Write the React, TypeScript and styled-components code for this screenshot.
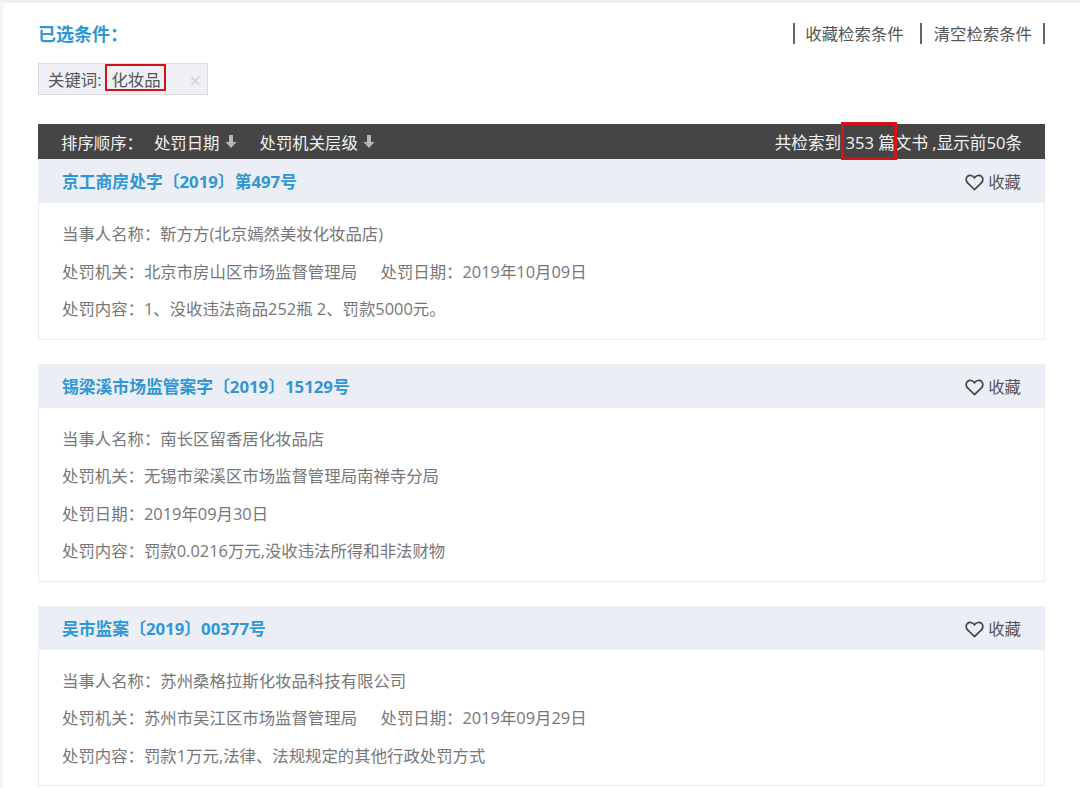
import React from 'react';
import styled, { createGlobalStyle } from 'styled-components';

const GlobalStyle = createGlobalStyle`
  html, body {
    margin: 0;
    padding: 0;
    background: #fff;
    overflow: hidden;
  }
  body {
    font-family: "Open Sans", "Noto Sans CJK SC", sans-serif;
  }
`;

const Page = styled.div`
  box-sizing: border-box;
  width: 1080px;
  height: 788px;
  overflow: hidden;
  padding: 0 35px 0 35px;
  border-top: 3px solid #f0f0f0;
  border-left: 3px solid #f5f5f5;
`;

const TopRow = styled.div`
  display: flex;
  justify-content: space-between;
  align-items: flex-start;
  height: 60px;
`;

const Title = styled.h2`
  margin: 19px 0 0;
  font-size: 18px;
  line-height: 24px;
  font-weight: 700;
  color: #2f97d3;
`;

const Actions = styled.div`
  display: flex;
  margin-top: 20px;
  border-right: 2px solid #666;
  height: 21px;
`;

const ActionLink = styled.a`
  display: block;
  padding: 0 16px 0 10px;
  border-left: 2px solid #666;
  font-size: 16.4px;
  line-height: 21px;
  color: #555;
  white-space: nowrap;
  &:last-child {
    padding: 0 11px 0 12px;
  }
`;

const Tag = styled.div`
  position: relative;
  box-sizing: border-box;
  display: flex;
  align-items: center;
  width: 170px;
  height: 32px;
  padding-left: 9px;
  background: #eef0f6;
  border: 1px solid #dcdcdc;
  font-size: 16.4px;
  color: #555;
`;

const TagClose = styled.span`
  position: absolute;
  right: 6px;
  top: 8px;
  font-size: 20px;
  line-height: 17px;
  color: #cfcfcf;
`;

const Mark = styled.span<{ $inset: string; $width: number }>`
  position: relative;
  display: inline-block;
  &::after {
    content: '';
    position: absolute;
    inset: ${(p) => p.$inset};
    border: ${(p) => p.$width}px solid #d4121a;
    pointer-events: none;
  }
`;

const TagValue = styled(Mark)`
  margin-left: 10px;
`;

const SortBar = styled.div`
  display: flex;
  justify-content: space-between;
  align-items: center;
  height: 35px;
  margin-top: 29px;
  padding: 0 23px 0 23px;
  background: #454545;
  font-size: 16.4px;
  color: #f2f2f2;
  white-space: nowrap;
`;

const SortGroup = styled.div`
  display: flex;
  align-items: center;
`;

const SortLabel = styled.span`
  margin-right: 11px;
`;

const SortItem = styled.span`
  display: flex;
  align-items: center;
  gap: 5px;
  margin-right: 23px;
`;

const ResultCount = styled.span`
  font-size: 16.6px;
`;

const Card = styled.section`
  margin-bottom: 24px;
  border: 1px solid #ececec;
  border-top: none;
`;

const CardHead = styled.header`
  display: flex;
  justify-content: space-between;
  align-items: center;
  height: 44px;
  margin: 0 -1px;
  padding: 0 24px 0 24px;
  background: #eceef6;
`;

const CardTitle = styled.a`
  font-size: 16.8px;
  font-weight: 700;
  color: #2f97d3;
`;

const Favorite = styled.span`
  display: flex;
  align-items: center;
  gap: 4px;
  font-size: 16.4px;
  color: #555;
`;

const Heart = styled.svg`
  margin-top: 3px;
`;

const CardBody = styled.div`
  padding: 12px 23px 11px;
`;

const Line = styled.p`
  margin: 0;
  height: 37.5px;
  font-size: 16.4px;
  line-height: 37.5px;
  color: #777;
  white-space: nowrap;
`;

const Gap = styled.span`
  display: inline-block;
  width: 23.5px;
`;

type CardData = {
  title: string;
  lines: React.ReactNode[];
};

const cards: CardData[] = [
  {
    title: '京工商房处字〔2019〕第497号',
    lines: [
      '当事人名称：靳方方(北京嫣然美妆化妆品店)',
      <>处罚机关：北京市房山区市场监督管理局<Gap />处罚日期：2019年10月09日</>,
      '处罚内容：1、没收违法商品252瓶 2、罚款5000元。',
    ],
  },
  {
    title: '锡梁溪市场监管案字〔2019〕15129号',
    lines: [
      '当事人名称：南长区留香居化妆品店',
      '处罚机关：无锡市梁溪区市场监督管理局南禅寺分局',
      '处罚日期：2019年09月30日',
      '处罚内容：罚款0.0216万元,没收违法所得和非法财物',
    ],
  },
  {
    title: '吴市监案〔2019〕00377号',
    lines: [
      '当事人名称：苏州桑格拉斯化妆品科技有限公司',
      <>处罚机关：苏州市吴江区市场监督管理局<Gap />处罚日期：2019年09月29日</>,
      '处罚内容：罚款1万元,法律、法规规定的其他行政处罚方式',
    ],
  },
];

const DownArrow = () => (
  <svg width="12" height="15" viewBox="0 0 12 15" fill="#b5b5b5">
    <path d="M4 1h4v7h3.5L6 14 .5 8H4z" />
  </svg>
);

const HeartIcon = () => (
  <Heart width="19" height="17" viewBox="0 0 19 17" fill="none" stroke="#444" strokeWidth="1.7">
    <path d="M9.5 15.5 2.6 8.8C.6 6.8.8 4 2.4 2.5 4.2.9 7.4 1 9.5 3.8 11.6 1 14.8.9 16.6 2.5c1.6 1.5 1.8 4.3-.2 6.3z" />
  </Heart>
);

const App: React.FC = () => {
  return (
    <Page>
      <GlobalStyle />
      <TopRow>
        <Title>已选条件：</Title>
        <Actions>
          <ActionLink>收藏检索条件</ActionLink>
          <ActionLink>清空检索条件</ActionLink>
        </Actions>
      </TopRow>
      <Tag>
        关键词:
        <TagValue $inset="-3px -5px 0 -6px" $width={2}>化妆品</TagValue>
        <TagClose>×</TagClose>
      </Tag>
      <SortBar>
        <SortGroup>
          <SortLabel>排序顺序：</SortLabel>
          <SortItem>处罚日期 <DownArrow /></SortItem>
          <SortItem>处罚机关层级 <DownArrow /></SortItem>
        </SortGroup>
        <ResultCount>
          共检索到 <Mark $inset="-8px -2px -6px -4px" $width={3}>353 篇</Mark>文书 ,显示前50条
        </ResultCount>
      </SortBar>
      {cards.map((card) => (
        <Card key={card.title}>
          <CardHead>
            <CardTitle>{card.title}</CardTitle>
            <Favorite><HeartIcon />收藏</Favorite>
          </CardHead>
          <CardBody>
            {card.lines.map((line, i) => (
              <Line key={i}>{line}</Line>
            ))}
          </CardBody>
        </Card>
      ))}
    </Page>
  );
};

export default App;
